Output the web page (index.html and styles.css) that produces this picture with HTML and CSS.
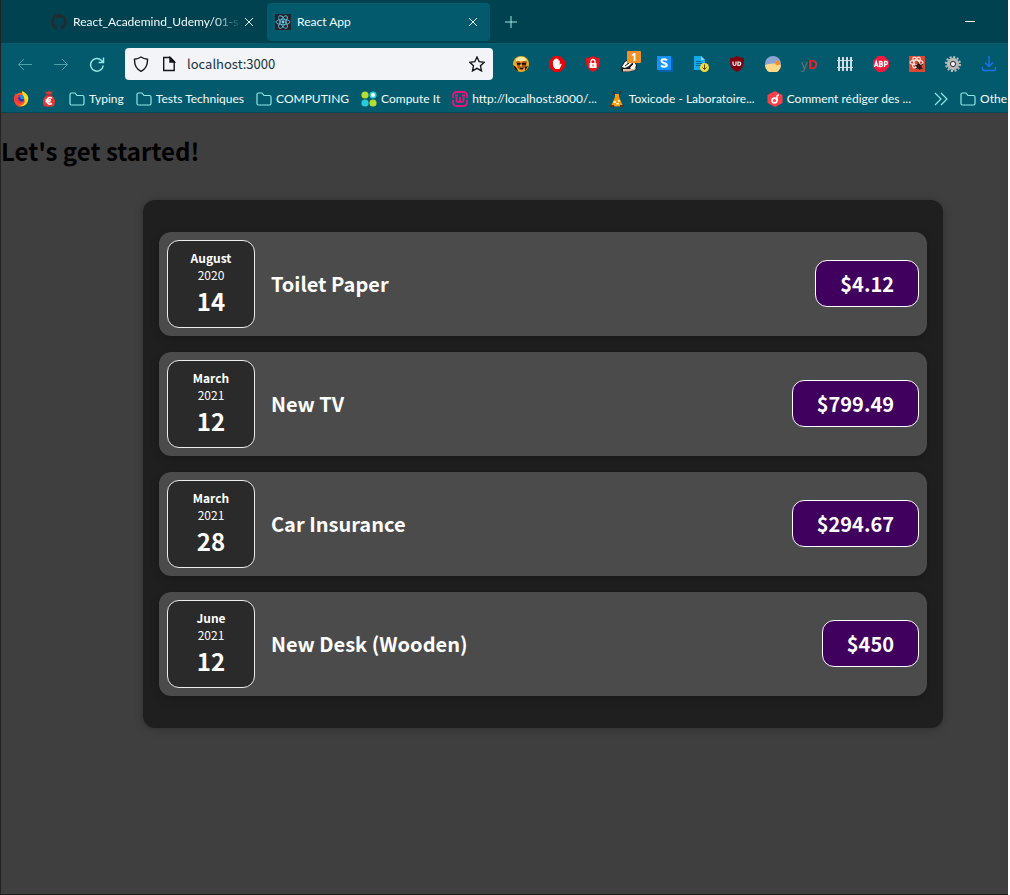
FILE: index.html
```html
<!DOCTYPE html>
<html lang="en">
<head>
<meta charset="utf-8">
<title>React App</title>
<link rel="stylesheet" href="styles.css">
</head>
<body>
<div class="window">
  <header class="chrome">
    <div class="tabs">
      <div class="tab">
        <svg class="icon" viewBox="0 0 16 16"><path fill="#252a31" d="M8 0a8 8 0 0 0-2.500 15.600c.4.100.5-.2.500-.4v-1.500c-2.200.5-2.700-1-2.700-1-.4-.9-.9-1.200-.9-1.200-.7-.5.100-.5.100-.5.800.1 1.200.8 1.200.8.700 1.200 1.900.9 2.300.7.100-.5.300-.9.500-1.100-1.800-.2-3.600-.9-3.600-4 0-.9.300-1.600.8-2.100-.1-.2-.4-1 .1-2.100 0 0 .7-.2 2.200.8a7.500 7.500 0 0 1 4 0c1.500-1 2.200-.8 2.200-.8.400 1.100.2 1.900.1 2.100.5.600.8 1.300.8 2.100 0 3.100-1.900 3.800-3.700 4 .3.300.6.800.6 1.500v2.200c0 .2.100.5.500.4A8 8 0 0 0 8 0z"/></svg>
        <span class="tab-title tab-title-fade">React_Academind_Udemy/01-st</span>
        <button class="tab-close" aria-label="Close tab"><svg viewBox="0 0 10 10"><path d="M1 1l8 8M9 1l-8 8"/></svg></button>
      </div>
      <div class="tab tab-active">
        <svg class="icon" viewBox="0 0 16 16"><rect width="16" height="16" rx="1" fill="#20232a"/><g fill="none" stroke="#61b8d4" stroke-width=".9"><ellipse cx="8" cy="8" rx="7" ry="2.700"/><ellipse cx="8" cy="8" rx="7" ry="2.700" transform="rotate(60 8 8)"/><ellipse cx="8" cy="8" rx="7" ry="2.700" transform="rotate(120 8 8)"/></g><circle cx="8" cy="8" r="1.400" fill="#7dd8f0"/></svg>
        <span class="tab-title">React App</span>
        <button class="tab-close" aria-label="Close tab"><svg viewBox="0 0 10 10"><path d="M1 1l8 8M9 1l-8 8"/></svg></button>
      </div>
      <button class="new-tab" aria-label="New tab"><svg viewBox="0 0 12 12"><path d="M6 0v12M0 6h12"/></svg></button>
      <button class="minimize" aria-label="Minimize"><svg viewBox="0 0 10 10"><path d="M0 4.500h10"/></svg></button>
    </div>

    <div class="toolbar">
      <div class="nav">
        <button class="nav-button nav-off" aria-label="Back"><svg class="icon" viewBox="0 0 16 16"><path d="M15 8.500H1.500M7 3L1.500 8.500 7 14"/></svg></button>
        <button class="nav-button nav-off" aria-label="Forward"><svg class="icon" viewBox="0 0 16 16"><path d="M1 8.500h13.500M9 3l5.500 5.500L9 14"/></svg></button>
        <button class="nav-button" aria-label="Reload"><svg class="icon" viewBox="0 0 16 16"><path stroke-width="1.500" d="M14.200 9.500A6.300 6.300 0 1 1 12.500 4.500l1.500 1.500M14.500 1.500V6.500H9.500"/></svg></button>
      </div>
      <form class="address">
        <svg class="icon" viewBox="0 0 16 16"><path d="M8 1c2 1.300 4 2 6.500 2.300C14.700 9 13 13 8 15.300 3 13 1.300 9 1.500 3.300 4 3 6 2.300 8 1z"/></svg>
        <svg class="icon page-icon" viewBox="0 0 16 16"><path d="M2.700 1.500h6.500l4 4v9H2.700z"/><path fill="#15141a" d="M9 1.500V6h4.500z"/></svg>
        <input class="url" type="text" aria-label="Address" value="localhost:3000">
        <button class="star" type="button" aria-label="Bookmark this page"><svg class="icon" viewBox="0 0 16 16"><path d="M8 1l2.200 4.700 5 .6-3.700 3.500 1 5.100L8 12.400l-4.500 2.500 1-5.100L.8 6.300l5-.6z"/></svg></button>
      </form>
      <div class="extensions">
        <button class="ext" aria-label="Avatar"><svg class="icon" viewBox="0 0 16 16"><circle cx="8" cy="8" r="8" fill="#e9b01e"/><path fill="#f5e7a0" d="M3 3l3-2h5l3 3-3 1.500-5-.5-3 1z"/><path fill="#a8541a" d="M3 5.500l3-.5h5l3 .5-1 5-4 4-4-2z"/><path fill="#1b0d0b" d="M4 7h3.500v1.700H4zM9 7h4v1.700H9zM7 12h3v1H7zM0 9l3 2 2.500 4.500-3.500-2zM15 10l-3 5 0-4z"/><path fill="#f0ac45" d="M6 5h4l-1 1.500H7zM7 8.500h2v2H7z"/></svg></button>
        <button class="ext" aria-label="AdBlock"><svg class="icon" viewBox="0 0 16 16"><path fill="#e6060b" d="M5 0h6l5 5v6l-5 5H5l-5-5V5z"/><path fill="#fff" d="M4 8V5c0-1 1-1 1 0V4c0-1 1.400-1 1.400 0V3c0-1 1.500-1 1.500 0v.5c0-1 1.500-1 1.500 0V5c0-1 1.300-1 1.300 0v4l.8-1c.6-.6 1.400 0 1 .7L10.500 13H6.500C5 12 4 10 4 8z"/></svg></button>
        <button class="ext" aria-label="Secure shield"><svg class="icon" viewBox="0 0 16 16"><path fill="#e5131c" d="M8 0c2 1.300 4 2 7 2 0 8-1 11-7 14C2 13 1 10 1 2c3 0 5-.7 7-2z"/><path fill="none" stroke="#fff" stroke-width="1.300" d="M6 8V5.500a2 2 0 0 1 4 0V8"/><rect x="4.500" y="7" width="7" height="5" fill="#fff"/><path stroke="#e5131c" d="M8 8.500v2"/></svg></button>
        <button class="ext" aria-label="Privacy Badger, 1 blocked"><svg class="icon" viewBox="0 0 16 16"><path fill="#1d1d1d" d="M0 12l3-6 4-3 7 2 2 5-1 4-7 2H1z"/><path fill="#fbf6ee" d="M1 11l3-5 4-2-2 4 2-1 3-2 1 1-4 4-4 2zM9 12l4-6 2 3-1 4-3 1z"/><path fill="#ddbca6" d="M2 13l5 0 5 0 3-1-1 2-6 1.500H2z"/><path stroke="#111" d="M4 10l4-3M8 12l4-4"/></svg><span class="badge">1</span></button>
        <button class="ext" aria-label="Stylus"><svg class="icon" viewBox="0 0 16 16"><path fill="#0860ad" d="M2 2h14v14H2z"/><path fill="#1592ff" d="M0 0h14v14H0z"/><path fill="none" stroke="#fff" stroke-width="2" d="M10 4.300C8 2.500 4.300 3 4.500 5.200S10 7 9.800 9.200 5.500 11 4 9.500"/></svg></button>
        <button class="ext" aria-label="Document download"><svg class="icon" viewBox="0 0 16 16"><path fill="#12a9ed" d="M1 0h7l4 4v10H1z"/><path fill="#7dd8ff" d="M8 0v4h4z"/><path stroke="#086a9c" d="M3 5.500h5M3 7.500h6M3 9.500h5"/><circle cx="11.500" cy="11.500" r="4.500" fill="#f9d936"/><path fill="none" stroke="#554b16" d="M11.500 8.500v5M9.500 11.500l2 2 2-2"/></svg></button>
        <button class="ext" aria-label="uBlock Origin"><svg class="icon" viewBox="0 0 16 16"><path fill="#800010" d="M8 0c2 1.300 4 2 7 2 0 8-1 11-7 14C2 13 1 10 1 2c3 0 5-.7 7-2z"/><path fill="none" stroke="#fff" stroke-width="1.200" d="M4 5.500V8c0 2 3 2 3 0V5.500M9 6v3.500h1a1.700 1.700 0 0 0 0-3.500z"/></svg></button>
        <button class="ext" aria-label="Day and night"><svg class="icon" viewBox="0 0 16 16"><circle cx="8" cy="8" r="8" fill="#8ca5d4"/><path fill="#ffd98a" d="M0 9c5-2 10-2 16 0a8 8 0 0 1-16 0z"/><circle cx="12.500" cy="7" r="2.400" fill="#ff8d21"/></svg></button>
        <button class="ext yd" aria-label="yD"><span class="yd-y">y</span>D</button>
        <button class="ext" aria-label="Fence"><svg class="icon" viewBox="0 0 16 16"><path fill="none" stroke="#cfdce0" stroke-width="2" d="M2 1v14M6 1v14M10 1v14M14 1v14"/><path stroke="#cfdce0" d="M0 4.500h16M0 11.500h16"/></svg></button>
        <button class="ext" aria-label="Adblock Plus"><svg class="icon" viewBox="0 0 16 16"><path fill="#ef183d" d="M5 0h6l5 5v6l-5 5H5l-5-5V5z"/><path fill="none" stroke="#fff" stroke-width="1.300" d="M1.500 11L3.200 5.500 5 11M2.200 9.300h2M6.500 5.500v5H8c2 0 2-2.500 0-2.500H6.500 8c1.700 0 1.700-2.500 0-2.500zM11.500 11V5.500H13c2 0 2 3 0 3h-1.500"/></svg></button>
        <button class="ext" aria-label="React developer tools"><svg class="icon" viewBox="0 0 16 16"><path fill="#db4932" d="M0 0h16v16H0z"/><g fill="none" stroke="#f8e5df" stroke-width="1.100"><ellipse cx="7.500" cy="6.500" rx="6.500" ry="2.400"/><ellipse cx="7.500" cy="6.500" rx="6" ry="2.400" transform="rotate(60 7.500 6.500)"/><ellipse cx="7.500" cy="6.500" rx="6" ry="2.400" transform="rotate(120 7.500 6.500)"/></g><ellipse cx="10" cy="10.500" rx="2.400" ry="3" fill="#2c1815" transform="rotate(-40 10 10.500)"/><path stroke="#2c1815" d="M6 9l8 4M7 13l7-5M9 6l2 8"/></svg></button>
        <button class="ext" aria-label="Settings"><svg class="icon" viewBox="0 0 16 16"><circle cx="8" cy="8" r="7" fill="none" stroke="#bcc3c6" stroke-width="2" stroke-dasharray="2 1.670"/><circle cx="8" cy="8" r="4.400" fill="#444" stroke="#b9b9b9" stroke-width="3.500"/><circle cx="8" cy="8" r="2.600" fill="#eee" stroke="#333"/></svg></button>
        <button class="ext" aria-label="Downloads"><svg class="icon" viewBox="0 0 16 16"><path fill="none" stroke="#1973f3" stroke-width="1.400" d="M8 0v10.500M4 6.500l4 4 4-4M1.500 11v2q0 1.500 1.500 1.500h10q1.500 0 1.500-1.500v-2"/></svg></button>
      </div>
    </div>

    <nav class="bookmarks" aria-label="Bookmarks">
      <a class="mark" href="#" aria-label="Firefox"><svg class="icon" viewBox="0 0 16 16"><circle cx="8" cy="8.500" r="7" fill="#ff5a26"/><path fill="#ffd927" d="M9 0c5 2 7.500 6 5.800 10.500C13.500 14 10 16 5 15c5 0 7.500-3 6.500-6.500C11 6 9 5 9 0z"/><circle cx="7.300" cy="7.800" r="3.800" fill="#2b3fa8"/><path fill="#1592ea" d="M6 4l4 .5 1.300 3.500-3.300 0z"/><path fill="#f93a3a" d="M1 6l1.500-4 1 2.500L7 5 5 7l1 3 4 1c-1.500 3-6 2.500-7.500-.5 1 3.500 3.500 4.500 7 4.500C4 17 .5 12 1 6z"/></svg></a>
      <a class="mark" href="#" aria-label="Money bag"><svg class="icon" viewBox="0 0 16 16"><path fill="#df3938" d="M4 0l2 1 2-1 2 1 2-1-2 4c4 3 5 6 3 11-1 1-9 1-10 0-2-5-1-8 3-11z"/><path stroke="#8b1d20" d="M6 4h4"/><path fill="none" stroke="#fff" stroke-width="1.500" d="M11 7C8 5.500 6 7 6 9.800S8 14 11 12.500M4.500 9H10M4.500 10.800H9.500"/></svg></a>
      <a class="mark" href="#"><svg class="icon folder" viewBox="0 0 16 16"><path d="M1 3.500Q1 2 2.500 2H6l2 2.500h5.500Q15 4.500 15 6v6.500q0 1.500-1.500 1.500h-11Q1 14 1 12.500z"/></svg><span>Typing</span></a>
      <a class="mark" href="#"><svg class="icon folder" viewBox="0 0 16 16"><path d="M1 3.500Q1 2 2.500 2H6l2 2.500h5.500Q15 4.500 15 6v6.500q0 1.500-1.500 1.500h-11Q1 14 1 12.500z"/></svg><span>Tests Techniques</span></a>
      <a class="mark" href="#"><svg class="icon folder" viewBox="0 0 16 16"><path d="M1 3.500Q1 2 2.500 2H6l2 2.500h5.500Q15 4.500 15 6v6.500q0 1.500-1.500 1.500h-11Q1 14 1 12.500z"/></svg><span>COMPUTING</span></a>
      <a class="mark" href="#"><svg class="icon" viewBox="0 0 16 16"><circle cx="4" cy="4" r="3.600" fill="#b5dc31"/><circle cx="12" cy="4" r="3.600" fill="#26cedb"/><circle cx="12" cy="4" r="2" fill="#fff"/><circle cx="4" cy="12" r="3.600" fill="#26cedb"/><circle cx="12" cy="12" r="3.600" fill="#b5dc31"/></svg><span>Compute It</span></a>
      <a class="mark" href="#"><svg class="icon" viewBox="0 0 16 16"><g fill="none" stroke="#ed127b" stroke-width="1.800"><path d="M1 7V5q0-4 4-4h6q4 0 4 4v2M1 9v2q0 4 4 4h6q4 0 4-4V9M3 4.500h3M10 4.500h3"/><path d="M4.500 6v3.500q0 1.500 1.700 1.500T8 9.500V6v3.500q0 1.500 1.700 1.500t1.800-1.500V6"/></g></svg><span>http://localhost:8000/...</span></a>
      <a class="mark" href="#"><svg class="icon" viewBox="0 0 16 16"><path stroke="#442514" d="M4 0l2 4M12 0l-2 4"/><path fill="#ff9b0b" d="M6 3h4v3l3.500 8q-5.500 3-11 0L6 6z"/><path stroke="#5a3415" stroke-width="2" d="M1 15h4M11 15h4"/><path fill="#fff0bd" d="M4.500 10h2.500v2H4.500zM9 9h2v2H9zM7 12h3v1.500H7z"/></svg><span>Toxicode - Laboratoire...</span></a>
      <a class="mark" href="#"><svg class="icon" viewBox="0 0 16 16"><path fill="#fa3f49" d="M8 0l7.500 4v8L8 16 .5 12V4z"/><circle cx="7.500" cy="9.500" r="2.400" fill="none" stroke="#fff" stroke-width="1.700"/><path fill="none" stroke="#fff" stroke-width="1.500" d="M10 10V5q0-1 2-1"/></svg><span>Comment rédiger des ...</span></a>
      <button class="more" aria-label="More bookmarks"><svg viewBox="0 0 14 14"><path d="M1 1l6 6-6 6M7 1l6 6-6 6"/></svg></button>
      <a class="mark" href="#"><svg class="icon folder" viewBox="0 0 16 16"><path d="M1 3.500Q1 2 2.500 2H6l2 2.500h5.500Q15 4.500 15 6v6.500q0 1.500-1.500 1.500h-11Q1 14 1 12.500z"/></svg><span>Othe</span></a>
    </nav>
  </header>

  <main class="page">
    <h2 class="heading">Let's get started!</h2>
    <section class="expenses">
      <article class="expense">
        <time class="date" datetime="2020-08-14"><span class="month">August</span><span class="year">2020</span><span class="day">14</span></time>
        <h3 class="title">Toilet Paper</h3>
        <div class="price">$4.12</div>
      </article>
      <article class="expense">
        <time class="date" datetime="2021-03-12"><span class="month">March</span><span class="year">2021</span><span class="day">12</span></time>
        <h3 class="title">New TV</h3>
        <div class="price">$799.49</div>
      </article>
      <article class="expense">
        <time class="date" datetime="2021-03-28"><span class="month">March</span><span class="year">2021</span><span class="day">28</span></time>
        <h3 class="title">Car Insurance</h3>
        <div class="price">$294.67</div>
      </article>
      <article class="expense">
        <time class="date" datetime="2021-06-12"><span class="month">June</span><span class="year">2021</span><span class="day">12</span></time>
        <h3 class="title">New Desk (Wooden)</h3>
        <div class="price">$450</div>
      </article>
    </section>
  </main>
</div>
</body>
</html>
```

FILE: styles.css
```css
* { box-sizing: border-box; }

body { margin: 0; background: #fff; }

button {
  padding: 0;
  border: 0;
  background: none;
  color: inherit;
  font: inherit;
}

svg { display: block; fill: none; }

.icon { width: 16px; height: 16px; flex: none; }

.window {
  display: flex;
  flex-direction: column;
  min-height: 100vh;
  margin-right: 2px;
  border-left: 1px solid #222;
  border-bottom: 1px solid #1b1d1a;
  background: #3f3f3f;
  overflow: hidden;
}

.chrome {
  background: #035a6c;
  color: #f4fbfc;
  font: 12px/16px Lato, "Open Sans", sans-serif;
  border-bottom: 1px solid #024553;
}

.tabs {
  display: flex;
  align-items: center;
  gap: 1px;
  height: 43px;
  padding: 0 33px 0 42px;
  background: #00424f;
}

.tab {
  display: flex;
  align-items: center;
  gap: 6px;
  width: 223px;
  height: 38px;
  padding: 0 12px 0 8px;
  border-radius: 4px;
}

.tab-active { background: #035a6c; }

.tab-title { flex: 1; min-width: 0; white-space: nowrap; }

.tab-title-fade { mask-image: linear-gradient(90deg, #000 85%, transparent 102%); }

.tab-close svg { width: 10px; height: 10px; stroke: #e4f2f4; }

.new-tab { margin-left: 14px; }
.new-tab svg { width: 12px; height: 12px; stroke: #9aebe8; }

.minimize { margin-left: auto; }
.minimize svg { width: 10px; height: 10px; stroke: #fff; }

.toolbar { display: flex; align-items: center; height: 42px; padding: 0 11px 0 16px; }

.nav { display: flex; gap: 20px; margin-right: 20px; }
.nav-button svg { stroke: #8eeae5; stroke-width: 1; }
.nav-off { opacity: .5; }

.address {
  display: flex;
  flex: 1;
  align-items: center;
  min-width: 0;
  height: 32px;
  padding: 0 8px;
  gap: 10px;
  border-radius: 4px;
  background: #f2f4f7;
}

.address svg { stroke: #15141a; stroke-width: 1.400; }

.page-icon { margin-left: 2px; }

.url {
  flex: 1;
  min-width: 0;
  padding: 0;
  border: 0;
  background: none;
  color: #17323d;
  font: 13px/20px "Noto Sans CJK JP", "Noto Sans", sans-serif;
  outline: 0;
}

.extensions { display: flex; gap: 20px; margin-left: 20px; }

.ext { position: relative; width: 16px; height: 16px; }

.badge {
  position: absolute;
  top: -5px;
  left: 6px;
  width: 14px;
  height: 12px;
  border-radius: 1px;
  background: #ee9228;
  color: #fff;
  font: bold 10px/12px "Open Sans", sans-serif;
}

.yd {
  display: flex;
  align-items: center;
  justify-content: center;
  color: #e11d20;
  font: bold 13px/16px "Open Sans", sans-serif;
}

.yd-y { color: #67757a; font-weight: 400; }

.bookmarks { display: flex; align-items: center; gap: 12px; height: 27px; padding: 0 1px 0 12px; }

.mark {
  display: flex;
  flex: none;
  align-items: center;
  gap: 4px;
  color: inherit;
  text-decoration: none;
  white-space: nowrap;
}

.folder, .more svg { stroke: #8eeae5; stroke-width: 1.200; }

.more { flex: none; margin-left: auto; }
.more svg { width: 14px; height: 14px; }

.page {
  flex: 1;
  background: #3f3f3f;
  font-family: "Noto Sans CJK JP", "Noto Sans", sans-serif;
}

.heading {
  margin: 20px 0 32px;
  color: #000;
  font-size: 24px;
  line-height: 35px;
}

.expenses {
  max-width: 800px;
  margin: 0 65px 32px 142px;
  padding: 32px 16px;
  display: grid;
  gap: 16px;
  border-radius: 12px;
  background: #1f1f1f;
  box-shadow: 0 1px 8px rgba(0, 0, 0, .25);
}

.expense {
  display: flex;
  align-items: center;
  gap: 16px;
  padding: 8px;
  border-radius: 12px;
  background: #4b4b4b;
  box-shadow: 0 2px 8px rgba(0, 0, 0, .25);
}

.date {
  display: flex;
  flex-direction: column;
  align-items: center;
  justify-content: center;
  width: 88px;
  height: 88px;
  padding-bottom: 2px;
  border: 1px solid #ececec;
  border-radius: 12px;
  background: #2a2a2a;
  color: #fff;
  font-size: 12px;
  line-height: 17px;
}

.month { font-weight: 700; }

.day { font-size: 24px; font-weight: 700; line-height: 35px; }

.title {
  flex: 1;
  margin: 0;
  padding-bottom: 1px;
  color: #fff;
  font-size: 20px;
  line-height: 29px;
}

.price {
  margin-bottom: 1px;
  padding: 8px 24px;
  border: 1px solid #fff;
  border-radius: 12px;
  background: #40005d;
  color: #fff;
  font-size: 20px;
  font-weight: 700;
  line-height: 29px;
}
```
